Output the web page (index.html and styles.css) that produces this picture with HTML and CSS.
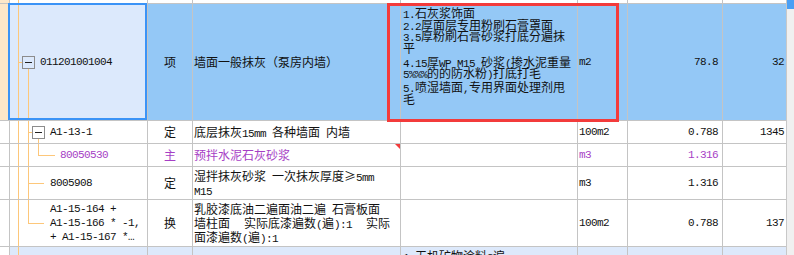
FILE: index.html
```html
<!DOCTYPE html>
<html lang="zh">
<head>
    <meta charset="UTF-8">
    <meta name="viewport" content="width=device-width, initial-scale=1.0">
    <title>分部分项</title>
    <link rel="stylesheet" href="styles.css">
</head>
<body>
    <div class="screen">
        <div class="grid-view">
            <div class="row r-stub">
                <div class="cell mark"></div>
                <div class="cell code"></div>
                <div class="cell"></div>
                <div class="cell"></div>
                <div class="cell"></div>
                <div class="cell"></div>
                <div class="cell"></div>
                <div class="cell"></div>
            </div>

            <div class="row r-item">
                <div class="cell mark"></div>
                <div class="cell code lv1 sel"><span class="tog"></span><span class="n">011201001004</span></div>
                <div class="cell type">项</div>
                <div class="cell name"><div>墙面一般抹灰（泵房内墙）</div></div>
                <div class="cell desc">
                    <div>
                        <p><span class="n">1.</span>石灰浆饰面</p>
                        <p><span class="n">2.2</span>厚面层专用粉刷石膏罩面</p>
                        <p><span class="n">3.5</span>厚粉刷石膏砂浆打底分遍抹</p>
                        <p>平</p>
                        <p class="wide"><span class="n">4.15</span>厚<span class="n">WP M15 </span>砂浆<span class="n">(</span>掺水泥重量</p>
                        <p><span class="n">5%%%</span>的的防水粉<span class="n">)</span>打底打毛</p>
                        <p class="wide"><span class="n">5.</span>喷湿墙面<span class="n">,</span>专用界面处理剂甩</p>
                        <p>毛</p>
                    </div>
                </div>
                <div class="cell unit n">m2</div>
                <div class="cell qty n">78.8</div>
                <div class="cell qty n">32.55</div>
            </div>

            <div class="row r-sub">
                <div class="cell mark"></div>
                <div class="cell code lv2"><i class="ln v2"></i><span class="tog"></span><span class="n">A1-13-1</span></div>
                <div class="cell type">定</div>
                <div class="cell name"><div>底层抹灰<span class="n">15mm </span>各种墙面<span class="n"> </span>内墙</div></div>
                <div class="cell desc"></div>
                <div class="cell unit n">100m2</div>
                <div class="cell qty n">0.788</div>
                <div class="cell qty n">1345.63</div>
            </div>

            <div class="row r-sub r-main">
                <div class="cell mark"></div>
                <div class="cell code lv3"><i class="ln v2"></i><i class="ln v3"></i><i class="ln h3"></i><span class="n">80050530</span></div>
                <div class="cell type">主</div>
                <div class="cell name"><div>预拌水泥石灰砂浆</div><span class="flag"></span></div>
                <div class="cell desc"></div>
                <div class="cell unit n">m3</div>
                <div class="cell qty n">1.316</div>
                <div class="cell qty n"></div>
            </div>

            <div class="row r-two">
                <div class="cell mark"></div>
                <div class="cell code lv2 leaf"><i class="ln v2"></i><i class="ln h2"></i><span class="n">8005908</span></div>
                <div class="cell type">定</div>
                <div class="cell name"><div>湿拌抹灰砂浆<span class="n"> </span>一次抹灰厚度≥<span class="n">5mm</span><br><span class="n">M15</span></div></div>
                <div class="cell desc"></div>
                <div class="cell unit n">m3</div>
                <div class="cell qty n">1.316</div>
                <div class="cell qty n"></div>
            </div>

            <div class="row r-three">
                <div class="cell mark"></div>
                <div class="cell code lv2 leaf"><i class="ln v2 half"></i><i class="ln h2"></i><span class="n">A1-15-164 +<br>A1-15-166 * -1,<br>+ A1-15-167 *…</span></div>
                <div class="cell type">换</div>
                <div class="cell name">
                    <div>乳胶漆底油二遍面油二遍<span class="n"> </span>石膏板面<br>墙柱面<span class="gap"></span>实际底漆遍数<span class="n">(</span>遍<span class="n">):1</span><span class="gap"></span>实际<br>面漆遍数<span class="n">(</span>遍<span class="n">):1</span></div>
                </div>
                <div class="cell desc"></div>
                <div class="cell unit n">100m2</div>
                <div class="cell qty n">0.788</div>
                <div class="cell qty n">137.28</div>
            </div>

            <div class="row r-next">
                <div class="cell mark"></div>
                <div class="cell code"></div>
                <div class="cell type"></div>
                <div class="cell name"></div>
                <div class="cell desc"><div><p><span class="n">1.</span>无机矿物涂料<span class="n">2</span>遍</p></div></div>
                <div class="cell unit"></div>
                <div class="cell qty"></div>
                <div class="cell qty"></div>
            </div>
        </div>

        <div class="scrollbar"><div class="thumb"></div></div>

        <!-- annotation drawn over the grid -->
        <div class="note-box"></div>
    </div>
</body>
</html>
```

FILE: styles.css
```css
:root{
    --grid : #c4c4c4;
    --text : #111;
    --purple : #a63ec5;
    --row-blue : #94c8f6;
    --sel-bg : #dce9fc;
    --sel-border : #3b93f6;
    --tree : #fdc77a;
    --mark : #fde7c9;
    --next-bg : #dde9fb;
    --red : #f33b3b;
}

*{
    padding: 0;
    margin: 0;
    box-sizing: border-box;
}

body{
    font-family: "Noto Sans CJK SC", sans-serif;
    font-size: 12px;
    line-height: 14px;
    color: var(--text);
    background: #fff;
}

.n{
    font-family: "Liberation Mono", monospace;
    font-size: 11px;
    letter-spacing: -0.6px;
}

/* mono runs inside CJK text must not stretch the line box */
.name .n,
.desc .n{
    line-height: 0;
}

.gap{
    display: inline-block;
    width: 14px;
}

.screen{
    position: relative;
    display: flex;
    width: 794px;
    height: 255px;
    overflow: hidden;
}

.grid-view{
    flex: none;
    width: 786px;
    overflow: hidden;
}

.row{
    display: grid;
    grid-template-columns: 10px 138px 45px 208px 177px 50px 95px 84px;
    width: 807px;
}

.r-stub{ height: 4px; }
.r-item{ height: 117px; background: var(--row-blue); }
.r-sub{ height: 23px; }
.r-two{ height: 33px; }
.r-three{ height: 47px; }
.r-next{ height: 40px; background: var(--next-bg); }
.r-main{ color: var(--purple); }

.cell{
    display: flex;
    align-items: center;
    min-width: 0;
    border-right: 1px solid var(--grid);
    border-bottom: 1px solid var(--grid);
    white-space: nowrap;
    overflow: hidden;
}

.mark{
    background: #fff;
}

.r-stub .mark,
.r-item .mark{
    background: var(--mark);
}

/* tree column */
.code{
    position: relative;
    overflow: visible;
}

.code::before{
    content: '';
    position: absolute;
    left: 8px;
    top: 0;
    bottom: 0;
    width: 1px;
    background: var(--tree);
}

.lv1{ padding-left: 12px; }
.lv2{ padding-left: 22px; }
.lv2.leaf{ padding-left: 40px; }
.lv3{ padding-left: 50px; }

.sel{
    background: var(--sel-bg);
}

.sel::after{
    content: '';
    position: absolute;
    left: -2px;
    top: -1px;
    right: 0;
    bottom: 0;
    border: 2px solid var(--sel-border);
    z-index: 2;
}

.tog{
    flex: none;
    width: 13px;
    height: 13px;
    margin-right: 5px;
    border: 1px solid #8c8c8c;
    background: linear-gradient(#222, #222) center / 7px 1px no-repeat;
}

.tog::before,
.tog::after{
    content: '';
    position: absolute;
    background: var(--tree);
}

.tog::before{
    top: 50%;
    width: 4px;
    height: 1px;
}

.tog::after{
    top: calc(50% + 7px);
    bottom: 0;
    width: 1px;
}

.lv1 .tog::before{ left: 8px; }
.lv1 .tog::after{ left: 18px; }
.lv2 .tog::before{ left: 18px; }
.lv2 .tog::after{ left: 28px; }

.ln{
    position: absolute;
    background: var(--tree);
}

.v2{
    left: 18px;
    top: 0;
    bottom: 0;
    width: 1px;
}

.v2.half{
    bottom: auto;
    height: 50%;
}

.v3{
    left: 28px;
    top: 0;
    width: 1px;
    height: 50%;
}

.h2{
    left: 18px;
    top: 50%;
    width: 16px;
    height: 1px;
}

.h3{
    left: 28px;
    top: 50%;
    width: 17px;
    height: 1px;
}

.type{
    justify-content: center;
}

.name{
    position: relative;
    padding-left: 1px;
}

.desc{
    align-items: flex-start;
    padding: 3px 2px 0;
    line-height: 11.5px;
}

.desc .wide{
    padding-top: 2.5px;
}

.unit{
    padding-left: 1px;
}

.qty{
    justify-content: flex-end;
    padding-right: 4px;
}

.flag{
    position: absolute;
    top: 0;
    right: 0;
    border-top: 5px solid var(--red);
    border-left: 5px solid transparent;
}

.scrollbar{
    flex: none;
    width: 8px;
    background: #f0f0f0;
    border-left: 1px solid #c8c8c8;
}

.thumb{
    height: 9px;
    background: #4a9ff5;
}

.note-box{
    position: absolute;
    left: 387px;
    top: 3px;
    width: 232px;
    height: 119px;
    border: 3px solid var(--red);
    z-index: 3;
}
```
